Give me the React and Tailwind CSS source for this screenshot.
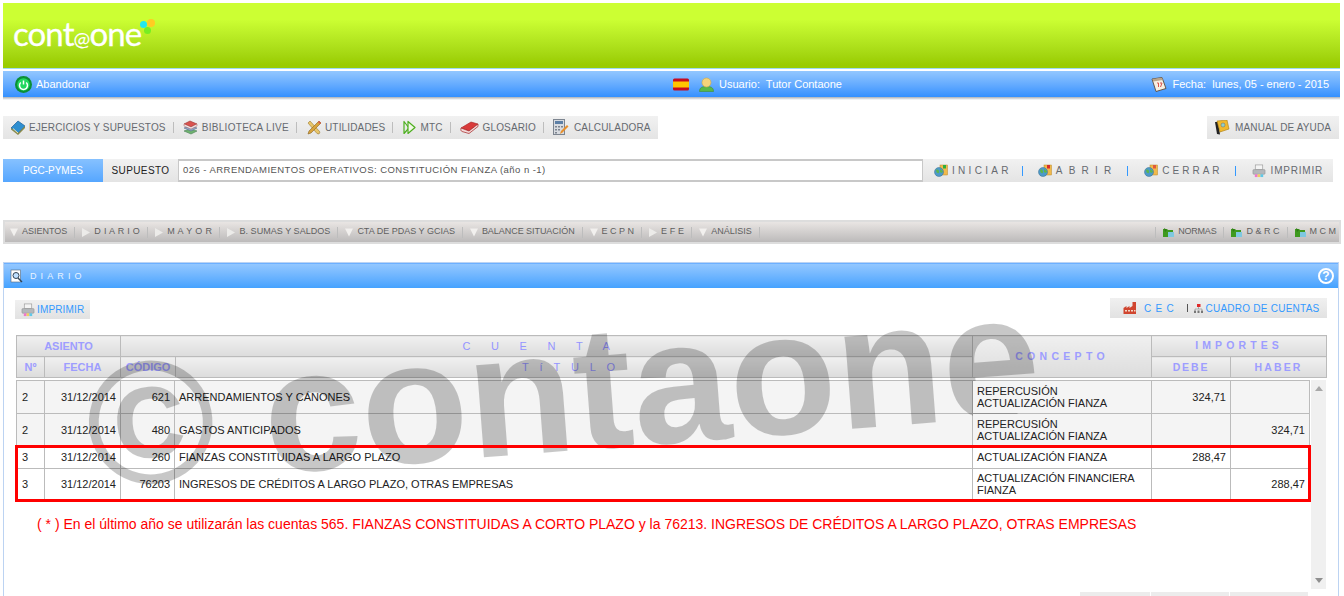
import React from "react";

const BlueBook = () => (
  <svg width="16" height="15" viewBox="0 0 16 15" className="shrink-0">
    <path d="M1 8 8 1l7 5-7 7z" fill="#2f8fd0" stroke="#1d5f9a" strokeWidth=".7" />
    <path d="M1 8v1.500L8 15l7-7V6l-7 7z" fill="#8a8a4a" />
    <path d="M3 8.500 8 13" stroke="#e9e4b0" strokeWidth="1" />
  </svg>
);
const Books = () => (
  <svg width="15" height="15" viewBox="0 0 15 15" className="shrink-0">
    <path d="M1 11 7 9l7 2-6 3z" fill="#6fb36f" stroke="#4a7f55" strokeWidth=".6" />
    <path d="M1 8l6-2 7 2-6 3z" fill="#8fa8c8" stroke="#5a6f8c" strokeWidth=".6" />
    <path d="M1 4l6-3 7 3-6 3z" fill="#d9534f" stroke="#9a3230" strokeWidth=".6" />
    <path d="M1 4v2l7 3 6-3V4L8 7z" fill="#eee" stroke="#a33" strokeWidth=".4" />
  </svg>
);
const Tools = () => (
  <svg width="14" height="15" viewBox="0 0 14 15" className="shrink-0">
    <path d="M1 3 3 1l10 11-1 2-2-.5z" fill="#e8c56a" stroke="#9c7b30" strokeWidth=".6" />
    <path d="M12 1l2 2L4 13l-3 1 1-3z" fill="#d8a23c" stroke="#8a6420" strokeWidth=".6" />
    <path d="M11 2l2 2 1-1-2-2z" fill="#d9534f" />
  </svg>
);
const Mtc = () => (
  <svg width="13" height="15" viewBox="0 0 13 15" fill="none" className="shrink-0">
    <path d="M1 1.500v12L6 8z" stroke="#4caf1e" strokeWidth="1.200" strokeLinejoin="round" />
    <path d="M5 1.500v12L12 7.500z" stroke="#4caf1e" strokeWidth="1.200" strokeLinejoin="round" fill="#f2f8e8" />
  </svg>
);
const RedBook = () => (
  <svg width="19" height="15" viewBox="0 0 19 15" className="shrink-0">
    <path d="M1 8 11 2l7 2-9 7z" fill="#d93a3a" stroke="#a32020" strokeWidth=".6" />
    <path d="M1 8c-.5 2 0 3 1 3.500l7 2 9-7V4l-9 7z" fill="#f3d9d9" stroke="#a32020" strokeWidth=".7" />
  </svg>
);
const Calc = () => (
  <svg width="16" height="17" viewBox="0 0 16 17" className="shrink-0">
    <rect x=".5" y=".5" width="11" height="15" fill="#d8dbe0" stroke="#7d8590" />
    <rect x="2" y="2" width="8" height="3" fill="#5c7fa6" />
    <path d="M2 7h2v1.500H2zM5 7h2v1.500H5zM8 7h2v1.500H8zM2 10h2v1.500H2zM5 10h2v1.500H5zM2 13h2v1.500H2z" fill="#7d8590" />
    <path d="M7 15l1-3 6-6 1.500 1.500-6 6z" fill="#e8902c" />
  </svg>
);
const Manual = () => (
  <svg width="16" height="15" viewBox="0 0 16 15" className="shrink-0">
    <path d="M1 2 3 14l3 .5L4 2z" fill="#222" />
    <path d="M3 1l10-1 2 9-9 3z" fill="#f0b92e" stroke="#a97c12" strokeWidth=".6" />
    <circle cx="9" cy="5" r="2" fill="#8fd0c8" stroke="#557" strokeWidth=".4" />
  </svg>
);
const Flag = () => (
  <svg width="16" height="13" viewBox="0 0 16 13" className="shrink-0">
    <rect y=".5" width="16" height="12" rx="1.500" fill="#c60b1e" />
    <rect y="3.500" width="16" height="6" fill="#ffc400" />
  </svg>
);
const User = () => (
  <svg width="15" height="15" viewBox="0 0 15 15" className="shrink-0">
    <path d="M.5 14.500c0-4 2.500-5 7-5s7 1 7 5z" fill="#58b84a" stroke="#3e8f34" strokeWidth=".6" />
    <circle cx="7.500" cy="5.500" r="4.500" fill="#f4d37a" stroke="#c9a648" strokeWidth=".6" />
  </svg>
);
const Calendar = () => (
  <svg width="16" height="15" viewBox="0 0 16 15" className="shrink-0">
    <path d="M1 2 11 .5l4 11-10 3z" fill="#f6efe2" stroke="#5a4a3a" strokeWidth=".9" />
    <path d="M1.500 2 11 .7l.7 2.300-9.500 1.500z" fill="#b9a58a" />
    <path d="M6 6h1.500v4M9 6h2l-1.500 4" fill="none" stroke="#d9534f" strokeWidth="1" />
  </svg>
);
const Power = () => (
  <svg width="17" height="17" viewBox="0 0 17 17" className="shrink-0">
    <circle cx="8.500" cy="8.500" r="8.500" fill="#0b8f36" />
    <circle cx="8.500" cy="8.500" r="6.200" fill="#22d860" />
    <path d="M5.800 6.500a4 4 0 1 0 5.400 0" fill="none" stroke="#fff" strokeWidth="1.500" />
    <path d="M8.500 4.500v4" stroke="#fff" strokeWidth="1.500" />
  </svg>
);
const Globe = ({ mark }) => (
  <svg width="14" height="13" viewBox="0 0 14 13" className="shrink-0">
    <rect x="6" y="1" width="7.500" height="10" fill="#f1b94a" stroke="#b98a2a" strokeWidth=".5" />
    <circle cx="5" cy="8" r="4.500" fill="#4c9ac9" stroke="#3a6f90" strokeWidth=".5" />
    <path d="M2 6c2-1 3 0 3 2s-2 1-2.500 0zM6 5c1 1 2.500 1 3 3-1 1-2 1-3 0z" fill="#5cb64a" />
    <path d="M9 1h3v3.500H9z" fill={mark} />
  </svg>
);
const Printer = () => (
  <svg width="14" height="14" viewBox="0 0 15 15" className="shrink-0">
    <rect x="3.500" y="1" width="8" height="5" fill="#f4f4f4" stroke="#999" strokeWidth=".7" />
    <rect x="1" y="6" width="13" height="5" rx="1" fill="#b4b8bc" stroke="#888" strokeWidth=".5" />
    <path d="M3 11h3v3H3z" fill="#ee77cc" />
    <path d="M6 11h3v3H6z" fill="#f0d060" />
    <path d="M9 11h3v3H9z" fill="#60c8e8" />
  </svg>
);
const Factory = () => (
  <svg width="14" height="14" viewBox="0 0 14 14" className="shrink-0">
    <path d="M.5 13V7l3-2v2l3-2v2l3-2V1H13v12z" fill="#d0452f" />
    <path d="M2 9h2v1.500H2zM5 9h2v1.500H5zM8 9h2v1.500H8zM11 9h1.500v1.500H11z" fill="#f2d9c8" />
  </svg>
);
const OrgChart = () => (
  <svg width="9" height="9" viewBox="0 0 9 9" className="shrink-0">
    <rect x="3" y="0" width="3.500" height="3" fill="#e02a2a" />
    <path d="M4.500 3v2M1 6V5h7v1" stroke="#888" strokeWidth=".6" fill="none" />
    <path d="M0 6.500h2V9H0zM3.500 6.500h2V9h-2zM7 6.500h2V9H7z" fill="#777" />
  </svg>
);
const GreenFolder = () => (
  <svg width="11" height="9" viewBox="0 0 11 9" className="shrink-0">
    <path d="M0 1h4l1 1h5v7H0z" fill="#3f9a1f" />
    <path d="M5 4h6v5H5z" fill="#7fc8e0" />
    <path d="M1 0l3 2-2 2z" fill="#2f7a14" />
  </svg>
);
const DocSearch = () => (
  <svg width="14" height="14" viewBox="0 0 14 14" className="shrink-0">
    <rect x="1" y="1" width="9.500" height="12" fill="#fff" stroke="#567" strokeWidth=".6" />
    <circle cx="6" cy="6.500" r="3" fill="#bfe0ff" stroke="#345" strokeWidth="1" />
    <path d="M8 9l4 4" stroke="#345" strokeWidth="1.500" />
  </svg>
);

const Bar = () => <span className="block w-px h-[11px] bg-[#bdbdbd] shrink-0" />;

const TOP_ITEMS = [
  { icon: <BlueBook />, label: "EJERCICIOS Y SUPUESTOS", left: 7, gap: 3, track: "tracking-[0.15px]" },
  { icon: <Books />, label: "BIBLIOTECA LIVE", left: 9, gap: 4, track: "tracking-[0.3px]" },
  { icon: <Tools />, label: "UTILIDADES", left: 10, gap: 4, track: "tracking-[0.15px]" },
  { icon: <Mtc />, label: "MTC", left: 10, gap: 4, track: "tracking-[0.15px]" },
  { icon: <RedBook />, label: "GLOSARIO", left: 9, gap: 4, track: "tracking-[0.15px]" },
  { icon: <Calc />, label: "CALCULADORA", left: 9, gap: 5, track: "tracking-[0.15px]" },
];

const NAV_ITEMS = [
  ["down", "ASIENTOS", "tracking-[0px]"],
  ["right", "D I A R I O", "tracking-[0.3px]"],
  ["right", "M A Y O R", "tracking-[0.4px]"],
  ["right", "B. SUMAS Y SALDOS", "tracking-[0.04px]"],
  ["down", "CTA DE PDAS Y GCIAS", "tracking-[0px]"],
  ["down", "BALANCE SITUACIÓN", "tracking-[-0.05px]"],
  ["down", "E C P N", "tracking-[0px]"],
  ["right", "E F E", "tracking-[0.15px]"],
  ["down", "ANÁLISIS", "tracking-[0px]"],
];

const ACTIONS = [
  { mark: "#2fae3a", label: "INICIAR", track: "tracking-[3.3px]", left: 11, after: 13 },
  { mark: "#d92a2a", label: "ABRIR", track: "tracking-[6.2px]", left: 15, after: 13 },
  { mark: "#e05a3a", label: "CERRAR", track: "tracking-[3px]", left: 16, after: 15 },
];

const ROWS = [
  { n: "2", fecha: "31/12/2014", cod: "621", titulo: "ARRENDAMIENTOS Y CÁNONES", concepto: ["REPERCUSIÓN", "ACTUALIZACIÓN FIANZA"], debe: "324,71", haber: "", h: "h-[33px]", bg: "bg-[#f4f4f4]", nudge: "" },
  { n: "2", fecha: "31/12/2014", cod: "480", titulo: "GASTOS ANTICIPADOS", concepto: ["REPERCUSIÓN", "ACTUALIZACIÓN FIANZA"], debe: "", haber: "324,71", h: "h-[33px]", bg: "bg-[#f4f4f4]", nudge: "" },
  { n: "3", fecha: "31/12/2014", cod: "260", titulo: "FIANZAS CONSTITUIDAS A LARGO PLAZO", concepto: ["ACTUALIZACIÓN FIANZA"], debe: "288,47", haber: "", h: "h-[22px]", bg: "bg-white", nudge: "pb-[2px]" },
  { n: "3", fecha: "31/12/2014", cod: "76203", titulo: "INGRESOS DE CRÉDITOS A LARGO PLAZO, OTRAS EMPRESAS", concepto: ["ACTUALIZACIÓN FINANCIERA", "FIANZA"], debe: "", haber: "288,47", h: "h-[32px]", bg: "bg-white", nudge: "pb-[2px]" },
];

const thBase = "border border-[#bbbbbb] p-0 align-middle text-center font-bold text-[#9d9dff] bg-linear-to-b from-[#f0f0f0] to-[#dcdcdc]";
const tdBase = "border border-[#bbbbbb] p-0 text-[11px] leading-[12px] text-[#222] align-middle";

export default function App() {
  return (
    <div className="relative w-[1344px] h-[596px] overflow-hidden bg-white font-['Liberation_Sans',Arial,sans-serif]">
      {/* Brand band */}
      <header className="mx-[3px] mt-[3px] h-[65px] w-[1337px] flex items-center pl-[10px] bg-linear-to-b from-[#ccff33] from-25% to-[#99cc00] to-95%">
        <div className="relative -mt-[1px] font-['Lato',sans-serif] text-[33px] leading-[36px] text-white tracking-[-0.9px] [-webkit-text-stroke:0.3px_white] select-none">
          cont<span className="text-[20px] [-webkit-text-stroke:0.1px_white]">@</span>one
          <span className="absolute right-[-14px] top-[4px] w-[8px] h-[8px] rounded-full bg-[#ffcc22]" />
          <span className="absolute right-[-6px] top-[6px] w-[7px] h-[7px] rounded-full bg-[#22e8ee]" />
          <span className="absolute right-[-10px] top-[12px] w-[7px] h-[7px] rounded-full bg-[#77ee22]" />
        </div>
      </header>
      <div className="mx-[3px] w-[1337px] h-px bg-[#9fdcf0]" />

      {/* Session bar */}
      <div className="mx-[3px] mt-[2px] w-[1337px] h-[26px] flex items-center text-[11px] text-white bg-linear-to-b from-[#93c7ff] to-[#3390ff]">
        <div className="w-[670px] pl-[12px] flex items-center gap-[4px]">
          <Power />
          <span>Abandonar</span>
        </div>
        <div className="flex items-center">
          <Flag />
          <span className="ml-[10px]"><User /></span>
          <span className="ml-[5px] whitespace-pre">Usuario:  Tutor Contaone</span>
        </div>
        <div className="ml-auto pr-[11px] flex items-center gap-[5px] whitespace-pre">
          <Calendar />
          <span>Fecha:  lunes, 05 - enero - 2015</span>
        </div>
      </div>
      <div className="mx-[3px] w-[1337px] h-[3px] bg-linear-to-b from-[#a9b0b8] to-white" />

      {/* Main menu */}
      <div className="mx-[3px] mt-[16px] w-[1336px] h-[23px] flex justify-between">
        <nav className="h-full flex items-center text-[10px] text-[#666a70] bg-linear-to-b from-[#f1f1f1] to-[#e4e4e4] pr-[7px]">
          {TOP_ITEMS.map((item, i) => (
            <React.Fragment key={item.label}>
              {i > 0 && <span className="ml-[7px]"><Bar /></span>}
              <span style={{ marginLeft: item.left, marginRight: item.gap }} className="flex items-center">{item.icon}</span>
              <span className={item.track + " whitespace-nowrap"}>{item.label}</span>
            </React.Fragment>
          ))}
        </nav>
        <div className="h-full w-[132px] flex items-center pl-[7px] gap-[5px] text-[10px] text-[#666a70] tracking-[0.15px] bg-linear-to-b from-[#f1f1f1] to-[#e4e4e4] whitespace-nowrap">
          <Manual />
          <span>MANUAL DE AYUDA</span>
        </div>
      </div>

      {/* Case selector */}
      <div className="mx-[3px] mt-[20px] w-[1330px] h-[23px] flex">
        <div className="w-[100px] flex items-center justify-center text-[10px] text-white bg-linear-to-b from-[#86c1ff] to-[#55a6ff]">PGC-PYMES</div>
        <div className="w-[75px] flex items-center justify-center text-[10px] text-[#222] tracking-[0.4px] bg-linear-to-b from-[#f1f1f1] to-[#e4e4e4]">SUPUESTO</div>
        <div className="w-[745px] flex items-center border border-[#c8c8c8] border-y-2 pl-[4px] text-[9.5px] text-[#555] tracking-[0.45px] whitespace-nowrap">
          026 - ARRENDAMIENTOS OPERATIVOS: CONSTITUCIÓN FIANZA (año n -1)
        </div>
        <div className="flex-1 flex items-center text-[10px] text-[#666a70] bg-linear-to-b from-[#f1f1f1] to-[#e4e4e4]">
          {ACTIONS.map((a) => (
            <React.Fragment key={a.label}>
              <span style={{ marginLeft: a.left }} className="mr-[4px] flex"><Globe mark={a.mark} /></span>
              <span className={a.track + " whitespace-nowrap"}>{a.label}</span>
              <span style={{ marginLeft: a.after - 3 }} className="w-px h-[10px] bg-[#3399ff]" />
            </React.Fragment>
          ))}
          <span className="ml-[16px] mr-[5px] flex"><Printer /></span>
          <span className="tracking-[0.8px]">IMPRIMIR</span>
        </div>
      </div>

      {/* Report tabs */}
      <div className="mx-[3px] mt-[38px] w-[1338px] h-[24px] border-2 border-[#dddddd] p-0">
        <div className="h-full flex items-center text-[9px] text-[#5f5f5f] bg-linear-to-b from-[#e9e5e3] to-[#bcbaba] whitespace-nowrap">
          {NAV_ITEMS.map(([dir, label, track], i) => (
            <React.Fragment key={label}>
              <span className={(i === 0 ? "ml-[5px] " : "ml-[7px] ") + "mr-[4px] flex"}>
                <svg width="8" height="9" viewBox="0 0 8 9">
                  {dir === "down" ? <path d="M0 .5h8L4 8.500z" fill="#f2f0ee" /> : <path d="M0 0v9l8-4.500z" fill="#ecebe9" />}
                </svg>
              </span>
              <span className={track}>{label}</span>
              <span className="ml-[7px]"><Bar /></span>
            </React.Fragment>
          ))}
          <span className="ml-auto"><Bar /></span>
          {[["NORMAS", "tracking-[-0.2px]"], ["D & R C", "tracking-[0px]"], ["M C M", "tracking-[0px]"]].map(([label, track], i) => (
            <React.Fragment key={label}>
              <span className="ml-[7px] mr-[4px] flex"><GreenFolder /></span>
              <span className={track}>{label}</span>
              {i < 2 && <span className="ml-[7px]"><Bar /></span>}
            </React.Fragment>
          ))}
          <span className="w-[3px]" />
        </div>
      </div>

      {/* Journal panel */}
      <section className="relative mx-[3px] mt-[18px] w-[1336px] h-[340px] border border-b-0 border-[#bcd3f2]">
        <div className="h-[25px] flex items-center border-t border-[#6db0ff] bg-linear-to-b from-[#93c7ff] to-[#44a2ff] pl-[6px] pr-[4px] text-[9px] text-[#e8f3ff] tracking-[4.1px]">
          <DocSearch />
          <span className="ml-[6px] mt-[1px]">DIARIO</span>
          <span className="ml-auto w-[16px] h-[16px] rounded-full border-2 border-white flex items-center justify-center text-[12px] leading-none font-bold text-white tracking-normal">?</span>
        </div>

        <div className="flex justify-between items-start pl-[11px] pr-[11px]">
          <button className="mt-[12px] h-[19px] w-[75px] flex items-center pl-[6px] gap-[2px] text-[10px] text-[#3399ff] tracking-[0.15px] bg-linear-to-b from-[#f0f0f0] to-[#e2e2e2]">
            <Printer />
            <span>IMPRIMIR</span>
          </button>
          <div className="mt-[10px] h-[20px] w-[217px] flex items-center pl-[13px] text-[10px] text-[#3399ff] bg-linear-to-b from-[#f0f0f0] to-[#e2e2e2] whitespace-pre">
            <Factory />
            <span className="ml-[7px] tracking-[-0.4px]">C  E  C</span>
            <span className="ml-[14px] w-px h-[8px] bg-[#555]" />
            <span className="ml-[6px]"><OrgChart /></span>
            <span className="ml-[2px] tracking-[0.25px]">CUADRO DE CUENTAS</span>
          </div>
        </div>

        {/* Column headers */}
        <table className="ml-[12px] mt-[16px] w-[1310px] table-fixed border-collapse">
          <colgroup>
            <col className="w-[28px]" />
            <col className="w-[76px]" />
            <col className="w-[55px]" />
            <col className="w-[797px]" />
            <col className="w-[179px]" />
            <col className="w-[79px]" />
            <col className="w-[96px]" />
          </colgroup>
          <thead>
            <tr className="h-[21px]">
              <th colSpan={2} className={thBase + " text-[11px]"}>ASIENTO</th>
              <th colSpan={2} className={thBase + " text-[11px] font-normal tracking-[20.6px] text-[#9494ff]"}>CUENTA</th>
              <th rowSpan={2} className={thBase + " text-[10.5px] tracking-[4.3px]"}>CONCEPTO</th>
              <th colSpan={2} className={thBase + " text-[10.5px] tracking-[4.1px]"}>IMPORTES</th>
            </tr>
            <tr className="h-[21px]">
              <th className={thBase + " text-[11px]"}>Nº</th>
              <th className={thBase + " text-[11px]"}>FECHA</th>
              <th className={thBase + " text-[11px]"}>CÓDIGO</th>
              <th className={thBase + " text-[11px] font-normal tracking-[10.8px] text-[#9494ff]"}>TíTULO</th>
              <th className={thBase + " text-[10.5px] tracking-[1.9px] pt-[1px]"}>DEBE</th>
              <th className={thBase + " text-[10.5px] tracking-[2.1px] pt-[1px]"}>HABER</th>
            </tr>
          </thead>
        </table>

        {/* Entries with the scroll rail beside them */}
        <div className="ml-[12px] mt-[2px] w-[1310px] flex">
          <table className="w-[1293px] h-fit table-fixed border-collapse">
            <colgroup>
              <col className="w-[28px]" />
              <col className="w-[76px]" />
              <col className="w-[54px]" />
              <col className="w-[798px]" />
              <col className="w-[179px]" />
              <col className="w-[79px]" />
              <col className="w-[79px]" />
            </colgroup>
            <tbody>
              {ROWS.map((r, i) => (
                <tr key={i} className={r.h + " " + r.bg}>
                  <td className={tdBase + " pl-[5px] " + r.nudge}>{r.n}</td>
                  <td className={tdBase + " pr-[4px] text-right " + r.nudge}>{r.fecha}</td>
                  <td className={tdBase + " pr-[4px] text-right " + r.nudge}>{r.cod}</td>
                  <td className={tdBase + " pl-[4px] whitespace-nowrap " + r.nudge}>{r.titulo}</td>
                  {/* This column sits above the stamp, the others let it show through */}
                  <td className={tdBase + " pl-[4px] relative z-10 " + r.bg + " " + r.nudge}>{r.concepto.map((c) => <div key={c}>{c}</div>)}</td>
                  <td className={tdBase + " pr-[4px] text-right " + r.nudge}>{r.debe}</td>
                  <td className={tdBase + " pr-[4px] text-right " + r.nudge}>{r.haber}</td>
                </tr>
              ))}
            </tbody>
          </table>
          <div className="ml-px w-[17px] h-[209px] flex flex-col items-center justify-between py-[6px] bg-[#f0f0f0]">
            <svg width="8" height="5" viewBox="0 0 8 5"><path d="M0 5 4 0l4 5z" fill="#a8a8a8" /></svg>
            <svg width="8" height="5" viewBox="0 0 8 5"><path d="M0 0l4 5 4-5z" fill="#8f8f8f" /></svg>
          </div>
        </div>

        {/* Bottom buttons, cut by the page edge */}
        <div className="absolute left-[1076px] top-[329px] flex gap-px">
          <span className="w-[70px] h-[8px] bg-[#ececec]" />
          <span className="w-[78px] h-[8px] bg-[#ececec]" />
          <span className="w-[78px] h-[8px] bg-[#ececec]" />
        </div>

        {/* Footnote */}
        <p className="absolute left-[33px] top-[252px] m-0 text-[14px] leading-[18px] text-[#ff0000] whitespace-nowrap">
          ( * ) En el último año se utilizarán las cuentas 565. FIANZAS CONSTITUIDAS A CORTO PLAZO y la 76213. INGRESOS DE CRÉDITOS A LARGO PLAZO, OTRAS EMPRESAS
        </p>
      </section>

      {/* Copyright stamp across the table */}
      <div className="absolute left-[85px] top-[303px] z-[5] pointer-events-none font-bold text-[175px] leading-[175px] text-[rgba(0,0,0,0.22)] whitespace-nowrap -rotate-[4.4deg] select-none">
        © contaone
      </div>

      {/* Highlight round the two closing entries */}
      <div className="absolute left-[15px] top-[445px] z-20 w-[1296px] h-[57px] border-[3px] border-[#ff0000] pointer-events-none" />
    </div>
  );
}
